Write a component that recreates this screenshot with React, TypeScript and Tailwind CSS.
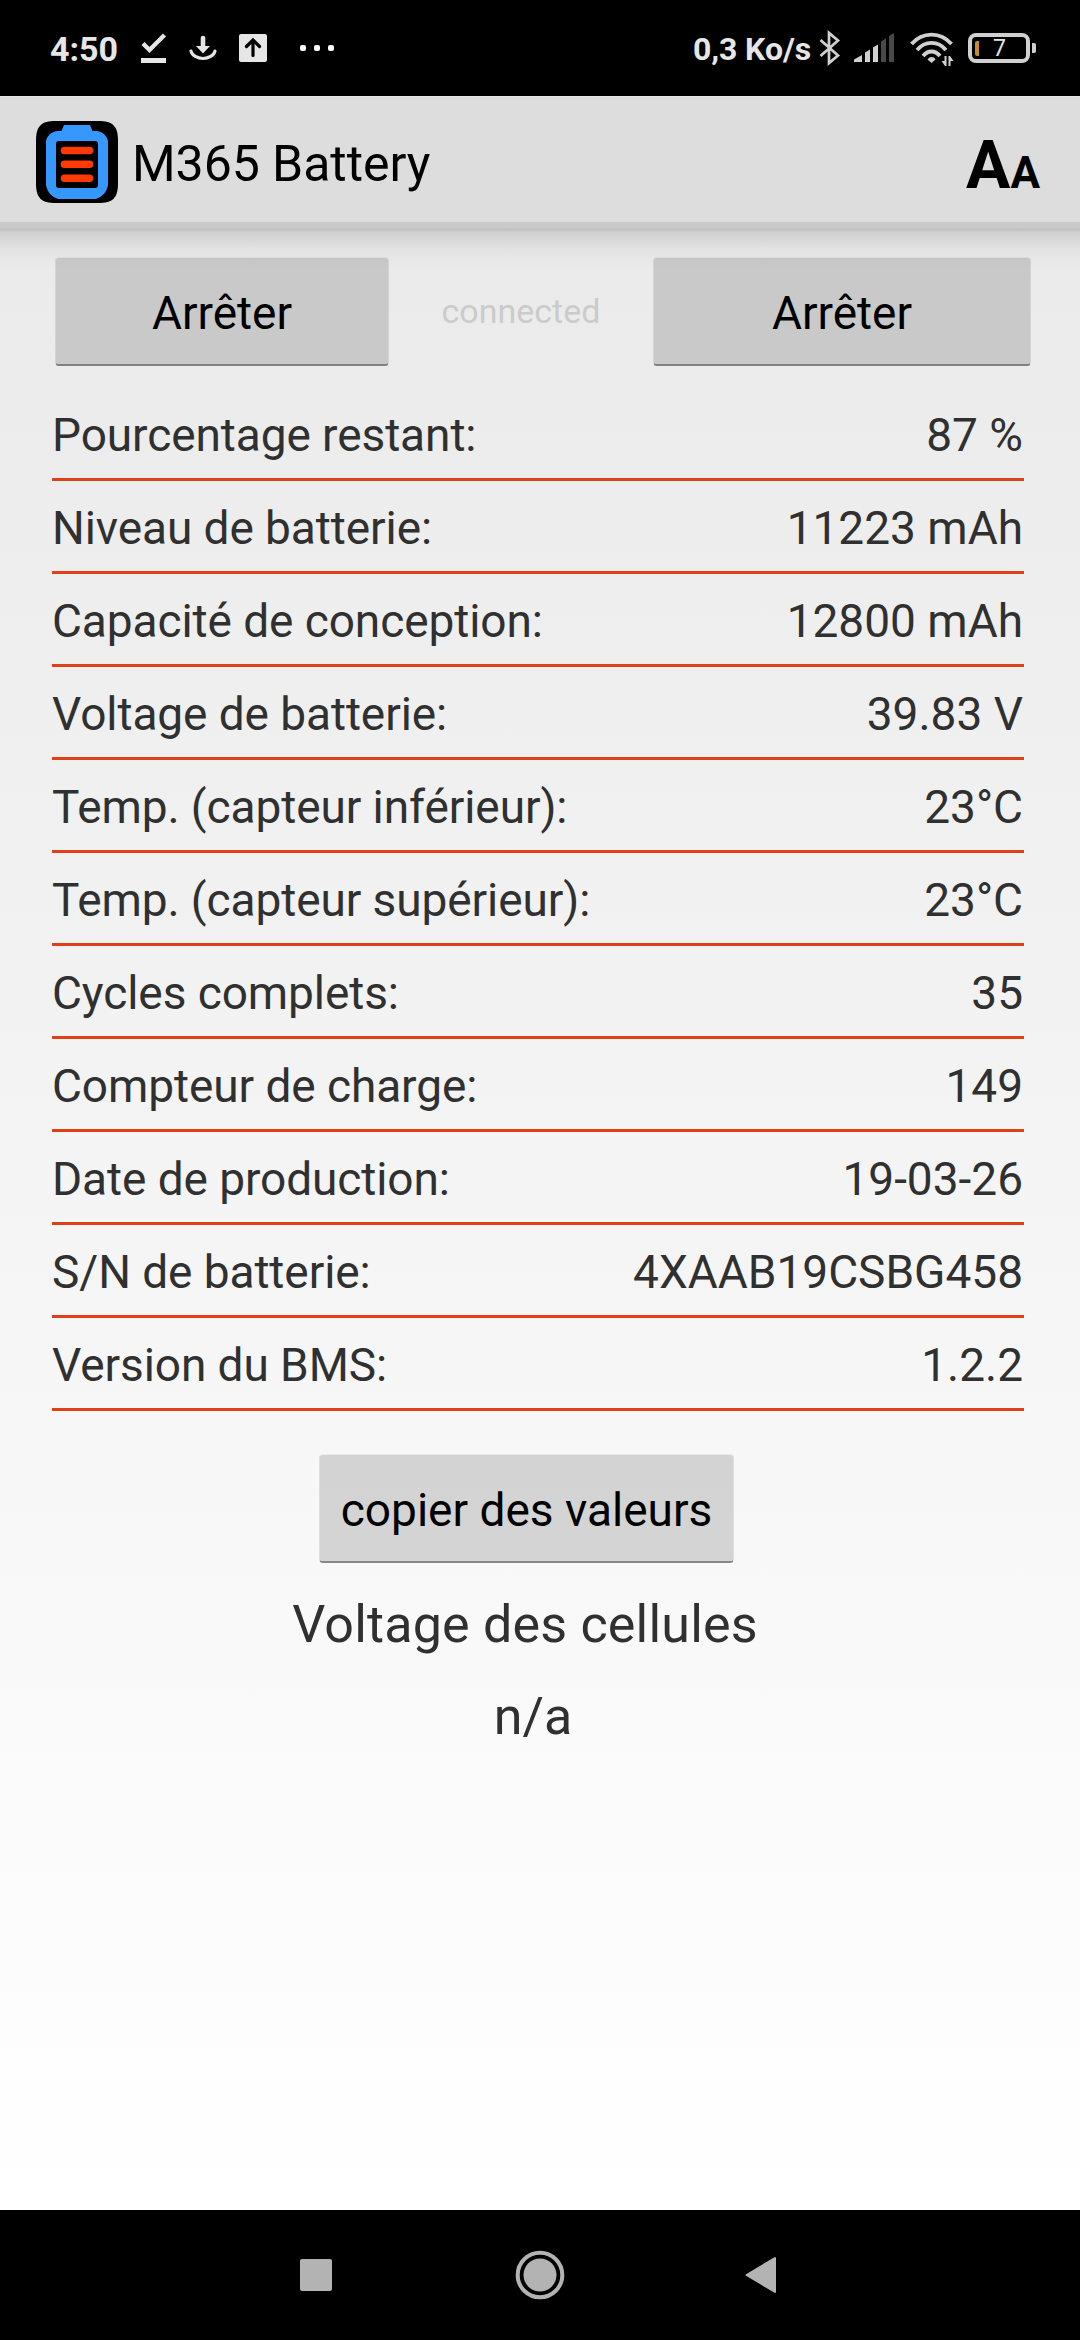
import * as React from "react";

interface Reading {
  label: string;
  value: string;
}

const readings: Reading[] = [
  { label: "Pourcentage restant:", value: "87 %" },
  { label: "Niveau de batterie:", value: "11223 mAh" },
  { label: "Capacité de conception:", value: "12800 mAh" },
  { label: "Voltage de batterie:", value: "39.83 V" },
  { label: "Temp. (capteur inférieur):", value: "23°C" },
  { label: "Temp. (capteur supérieur):", value: "23°C" },
  { label: "Cycles complets:", value: "35" },
  { label: "Compteur de charge:", value: "149" },
  { label: "Date de production:", value: "19-03-26" },
  { label: "S/N de batterie:", value: "4XAAB19CSBG458" },
  { label: "Version du BMS:", value: "1.2.2" },
];

function StatusBar() {
  return (
    <div className="flex h-24 shrink-0 items-start justify-between bg-black pl-[50px] pr-[44px] text-[#e6e6e6]">
      <div className="flex items-start">
        <span className="mt-[29px] w-[91px] text-[34px] leading-10 font-bold">4:50</span>
        <svg className="mt-8 h-8 w-[26px]" viewBox="0 0 26 32" fill="none" stroke="currentColor">
          <path d="M2 11.5 8.5 18 23.5 3" strokeWidth="4.4" />
          <path d="M0 28.5h25" strokeWidth="5" />
        </svg>
        <svg className="mt-8 ml-[22px] h-8 w-7" viewBox="0 0 28 32" fill="none" stroke="currentColor">
          <path d="M14 6v9" strokeWidth="4.6" strokeLinecap="round" />
          <path d="M7 14h14l-7 7.5z" fill="currentColor" stroke="none" />
          <path d="M2 19c1 4.6 6.5 7.5 12 7.5s11-2.9 12-7.5" strokeWidth="3.2" strokeLinecap="round" />
        </svg>
        <svg className="mt-[34px] ml-[22px] size-7" viewBox="0 0 28 28" fill="none">
          <rect width="28" height="28" rx="2" fill="currentColor" />
          <path d="M14 21.5V7M7.5 12.5 14 6l6.5 6.5" stroke="#000" strokeWidth="3.2" strokeLinecap="round" />
        </svg>
        <div className="mt-[45px] ml-[33px] flex gap-2">
          <i className="size-1.5 rounded-[2px] bg-white" />
          <i className="size-1.5 rounded-[2px] bg-white" />
          <i className="size-1.5 rounded-[2px] bg-white" />
        </div>
      </div>
      <div className="flex items-start">
        <span className="mt-[29px] text-[32px] leading-10 font-bold tracking-[-0.1px] whitespace-nowrap">
          0,3 Ko/s
        </span>
        <svg className="mt-[30px] ml-[8px] h-9 w-[22px]" viewBox="0 0 22 36" fill="none" stroke="#d0d0d0">
          <path d="M1.5 10 19 25.5 10 33V3l9 7.5L1.5 26" strokeWidth="2.7" />
        </svg>
        <svg className="mt-8 ml-[13px] h-[30px] w-[41px]" viewBox="0 0 41 30" fill="#d0d0d0">
          <path d="M0 30v-2.5L8 23v7z" />
          <path d="M11 30V20.5l5-3V30zM19 30V15.500l5-3V30z" />
          <path d="M27 30V9.500l5-3V30zM35 30V4l5-3v29z" fill="#484848" />
        </svg>
        <svg className="mt-8 ml-[15px] h-9 w-11" viewBox="0 0 44 36" fill="none" stroke="#d0d0d0">
          <path d="M1.5 12c11-12.500 29-12.500 40 0M7 18c8-9.500 21-9.500 29 0M13 24c4.800-6 12.200-6 17 0" strokeWidth="3.8" />
          <path d="M17.5 27.500c2-3.300 6.500-3.300 8 0L21.500 31z" fill="#d0d0d0" stroke="none" />
          <path d="M34.500 24h2v10h-1.500l-3.500-5h3zM38.500 34V24H40l3.500 5h-3v5z" fill="#d0d0d0" stroke="none" />
        </svg>
        <div className="mt-[33px] ml-[14px] flex items-center gap-[2px]">
          <div className="flex h-[30px] w-[62px] items-center rounded-[8px] border-4 border-[#d0d0d0] pl-[3px]">
            <i className="h-[15px] w-1 rounded-l-[2px] bg-[#cc8a29]" />
            <span className="ml-[14px] text-[23px] leading-none">7</span>
          </div>
          <i className="h-2.5 w-1 rounded-r-[2px] bg-[#d0d0d0]" />
        </div>
      </div>
    </div>
  );
}

function AppIcon() {
  return (
    <svg className="size-[82px]" viewBox="0 0 82 82">
      <path d="M0 20C0 5 5 0 20 0h42c15 0 20 5 20 20v42c0 15-5 20-20 20H20C5 82 0 77 0 62z" fill="#000" />
      <path
        d="M28 4h26l2.500 6H61c6 1 10 5 11 10v44c-1 7-6 12-12 14H22c-6-2-11-7-12-14V20c1-5 5-9 11-10h4.500z"
        fill="#3698ff"
      />
      <rect x="20" y="20" width="42" height="47" rx="3" fill="#000" />
      <path d="M28.5 29.5h25M28.5 43.2h25M28.5 57.3h25" stroke="#ff3a05" strokeWidth="7.6" strokeLinecap="round" />
    </svg>
  );
}

function ActionBar() {
  return (
    <header className="flex h-[132px] shrink-0 items-start border-t border-b-6 border-t-[#e6e6e6] border-b-[#cacaca] bg-[#ddd] pl-9 pr-10 text-black">
      <div className="mt-6">
        <AppIcon />
      </div>
      <h1 className="mt-[37px] ml-[14px] text-[50px] leading-[60px] tracking-[-0.05px]">M365 Battery</h1>
      <div className="mt-[29px] ml-auto flex items-baseline leading-[80px] font-bold">
        <span className="text-[66px]">A</span>
        <span className="text-[44px]">A</span>
      </div>
    </header>
  );
}

function HoloButton({ className, children }: { className: string; children: React.ReactNode }) {
  return (
    <button
      type="button"
      className={
        "flex h-[109px] items-center justify-center rounded-[4px] border border-x-black/10 border-t-black/5 border-b-2 border-b-black/45 bg-black/[0.145] bg-clip-padding pt-1 text-[46px] text-black " +
        className
      }
    >
      {children}
    </button>
  );
}

export default function App() {
  return (
    <div className="flex h-[2340px] w-[1080px] flex-col overflow-hidden bg-linear-to-b from-[#e8e8e8] to-white to-[2210px] font-[Roboto,sans-serif]">
      <StatusBar />
      <ActionBar />
      <div className="h-[3px] shrink-0 bg-[#c3c3c3]" />
      <main className="flex grow flex-col bg-[linear-gradient(to_bottom,rgba(0,0,0,0.12),rgba(0,0,0,0.035)_18px,transparent_36px)] pt-[26px]">
        <div className="flex items-center pl-[55px]">
          <HoloButton className="w-[334px]">Arrêter</HoloButton>
          <span className="w-[264px] text-center text-[34px] text-[#cbcbcb]">connected</span>
          <HoloButton className="w-[378px]">Arrêter</HoloButton>
        </div>
        <dl className="mt-[22px] ml-[52px] w-[972px] text-[46px] leading-[54px] text-[#303030]">
          {readings.map((r) => (
            <div key={r.label} className="flex h-[93px] justify-between border-b-3 border-[#e04018] pt-5 pr-px">
              <dt className="tracking-[-0.08px]">{r.label}</dt>
              <dd>{r.value}</dd>
            </div>
          ))}
        </dl>
        <HoloButton className="mt-[43px] ml-[319px] w-[415px]">copier des valeurs</HoloButton>
        <div className="w-[1050px] pt-[31px] text-center text-[52px] leading-[61px] text-[#303030]">
          <h2 className="tracking-[0.2px]">Voltage des cellules</h2>
          <p className="mt-[31px] pl-4">n/a</p>
        </div>
      </main>
      <nav className="flex h-[130px] shrink-0 items-center bg-black pl-[300px]">
        <i className="size-8 rounded-[2px] bg-[#b3b3b3]" />
        <svg className="ml-[183px] size-[50px]" viewBox="0 0 50 50">
          <circle cx="25" cy="25" r="22.3" fill="none" stroke="#b3b3b3" strokeWidth="4" />
          <circle cx="25" cy="25" r="16.5" fill="#b3b3b3" />
        </svg>
        <svg className="ml-[180px] h-[38px] w-8" viewBox="0 0 32 38">
          <path d="M1.5 19 30 2v34z" fill="#b3b3b3" stroke="#b3b3b3" strokeWidth="2" strokeLinejoin="round" />
        </svg>
      </nav>
    </div>
  );
}
